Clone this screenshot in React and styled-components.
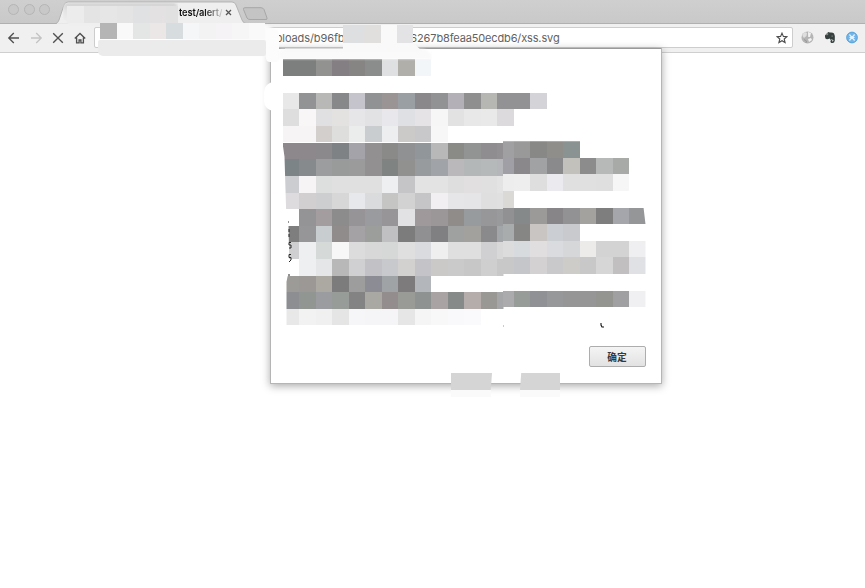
import React from 'react';
import styled, { createGlobalStyle } from 'styled-components';

const GlobalStyle = createGlobalStyle`
  * { box-sizing: border-box; }
  html, body, #root { margin: 0; height: 100%; }
  body { background: #fff; overflow: hidden; font-family: "Inter", "Liberation Sans", sans-serif; }
`;

const Browser = styled.div`
  position: relative;
  display: flex;
  flex-direction: column;
  width: 865px;
  height: 588px;
  overflow: hidden;
  background: #fff;
`;

const TabStrip = styled.header`
  display: flex;
  height: 24px;
  background: linear-gradient(#cfcfcf, #c9c9c9);
  border-bottom: 1px solid #b0b0b0;
`;

const WindowButtons = styled.div`
  display: flex;
  gap: 4.5px;
  padding: 4px 0 0 8px;
  width: 56px;
  flex: none;
`;

const WindowButton = styled.span`
  width: 11px;
  height: 11px;
  flex: none;
  border: 1px solid #b5b5b5;
  border-radius: 50%;
  background: #c8c8c8;
`;

const Tab = styled.div`
  position: relative;
  display: flex;
  align-items: center;
  width: 190px;
  height: 24px;
  padding: 1px 0 0 123px;
`;

const TabShape = styled.svg`
  position: absolute;
  inset: 0;
`;

const TabTitle = styled.span`
  position: relative;
  width: 43px;
  overflow: hidden;
  white-space: nowrap;
  font: 600 9.3px/14px "Inter", sans-serif;
  letter-spacing: -0.1px;
  color: transparent;
  background: linear-gradient(90deg, #111 60%, rgba(30, 30, 30, 0.15) 100%);
  background-clip: text;
`;

const TabClose = styled.svg`
  position: relative;
  margin-left: 3px;
`;

const NewTab = styled.svg`
  margin: 7px 0 0 -4px;
`;

const Toolbar = styled.nav`
  display: flex;
  align-items: center;
  height: 29px;
  padding: 0 7px 1px 6.5px;
  background: #f0f0f0;
  border-bottom: 1px solid #cfcfcf;
`;

const NavIcon = styled.svg`
  flex: none;
  width: 14px;
  height: 14px;
  margin-right: 8px;
  fill: none;
  stroke: ${({ $dim }) => ($dim ? '#c3c3c3' : '#505050')};
  stroke-width: 1.35;
`;

const AddressBar = styled.div`
  display: flex;
  align-items: center;
  width: 699.5px;
  height: 21px;
  margin-left: -1px;
  padding: 0 4.5px 0 177px;
  background: #fff;
  border: 1px solid #cdcdcd;
  border-radius: 2px;
`;

const Address = styled.div`
  display: flex;
  flex: 1;
  color: #626262;
  font: 400 11px/16px "Inter", sans-serif;
  white-space: nowrap;
`;

const UploadPath = styled.span`
  display: flex;
  justify-content: flex-end;
  width: 73px;
  letter-spacing: -0.1px;
`;

const FileName = styled.span`
  margin-left: auto;
  margin-right: 216px;
  letter-spacing: -0.14px;
`;

const Star = styled.svg`
  flex: none;
`;

const Extensions = styled.div`
  display: flex;
  gap: 10px;
  margin-left: 7.5px;
`;

const Dialog = styled.section`
  position: absolute;
  left: 269.5px;
  top: 48px;
  display: flex;
  flex-direction: column;
  width: 392px;
  height: 336px;
  padding: 10px 15px 16px 12px;
  background: #fff;
  border: 1px solid #b5b5b5;
  border-top-color: #999;
  border-radius: 1px;
  box-shadow: 0 2px 9px rgba(0, 0, 0, 0.34);
`;

const Message = styled.div`
  position: relative;
  height: 287px;
  flex: none;
`;

const Heading = styled.div`
  display: flex;
  flex-direction: column;
  gap: 17px;
`;

const LowerArea = styled.div`
  display: flex;
  padding-top: 0.5px;
`;

const LeftMosaic = styled.div`
  display: flex;
  flex-direction: column;
  width: 221px;
  clip-path: polygon(0 0, 100% 0, 100% 100%, 4px 100%, 4px 139px, 5px 134px, 7px 130px, 6px 83px, 4px 80px, 2px 14px);
`;

const RightMosaic = styled.div`
  display: flex;
  flex-direction: column;
  margin-top: -1.5px;
  margin-left: -1px;
  width: 143px;
  clip-path: polygon(0 0, 141px 0, 141px 66px, 143px 83px, 143px 100%, 0 100%);
`;

const PixelRow = styled.div`
  display: flex;
  height: ${({ $height }) => $height || 16.6}px;
`;

const Pixel = styled.span`
  flex: none;
  width: ${({ $width }) => $width || 16.5}px;
  background: ${({ $color }) => $color};
`;

const Confirm = styled.button`
  align-self: flex-end;
  width: 57px;
  height: 21px;
  flex: none;
  padding: 0;
  color: #383838;
  background: linear-gradient(#f4f4f4, #e2e2e2);
  border: 1px solid #adadad;
  border-radius: 2px;
  font: bold 9.7px/18px "Noto Sans CJK SC", sans-serif;
`;

const Patch = styled.div`
  position: absolute;
  left: ${({ $x }) => $x}px;
  top: ${({ $y }) => $y}px;
  width: ${({ $w }) => $w}px;
  height: ${({ $h }) => $h}px;
  display: flex;
  flex-direction: column;
  overflow: hidden;
  background: ${({ $bg }) => $bg || 'transparent'};
  border-radius: ${({ $radius }) => $radius || 0};
  clip-path: ${({ $clip }) => $clip || 'none'};
  filter: ${({ $soft }) => ($soft ? `blur(${$soft}px)` : 'none')};
`;

const Specks = styled.svg`
  position: absolute;
  left: -1px;
  top: 158px;
`;

const split = (s) => s.split(' ').filter(Boolean).map((c) => (c === '-' ? 'transparent' : `#${c}`));

const headingRow = '7d7e7e 7d7e7e 929290 847f82 868584 8b8d8d dfe0e2 b0afaa f2f6f8';

const introRows = [
  'e8e8e8 929394 b8b8b6 86888a c5c3cb 909294 9a9594 9a9fa4 8a888a 919294 b3b0b8 8f8f90 b6b7b2 929294 929294 d4d3d8',
  'dedede f8f6f7 e0e0e2 e3e2e0 e6e6e9 e2e2e4 e8e8ec dfe0e4 e5e3e5 f6f6f6 e2e2e2 e8e8e8 e9e9e9 dcdadc',
  'f6f4f5 f6f4f5 d2cfcd dededc ebeded cacdd0 eceeef cccac9 c8c8ca f7f7f7',
];

const leftRows = [
  '8d888c 8d888c 8b898c 7e8284 a4a3aa 929090 8a8a89 909193 91969a b8b8b9 8a8a86 929393 908d90 929092',
  '7d8488 868a8d 9c9d9f 999b9a 9b9b9c 929090 7f8381 919190 989b9d a0a4a8 bbb8bc b4b7b8 b5b9ba b5b6ba',
  'cccdd0 f6f4f4 dddfdf e0e0e1 e0e0e1 e0e0e1 eeeff1 c5c5c8 e3e3e3 e3e3e3 dedede e1dfdf e0e0e1 e3e3e3',
  'dddbdd d1cfd0 cdcecf d8d7d8 e7e8eb dadbdd c5c5c4 d2d2d2 c5c5c8 f1eff1 e6e6e8 e5e5e7 e0dfdf e0e0e0',
  '- 949395 a39d9f 8d8c8d 969496 9a9b9f 979598 e2e2e4 9f999b 9b9799 8f8c89 979b9d 979799 999a9c',
  '7e7e7e 969698 c8cdd0 918c8c a5a2a5 9b9e9b c0bfc2 7c7c7c 908f91 808083 9ea19f a2a19d 8a8a8c a2a6a8',
  'cfcfd2 eeeff0 d5dad9 f7f7f8 dcdcdd d8d8d8 d5d8d7 dfdfe0 dadbde efeff0 dfdfdf e0dfdf d0d0d2 d8d8d8',
  '- eeeff0 e5e6e8 b8b8b8 d0d0d3 c1c1c6 c8c9cd d3d0d0 c4c4c8 cac9c8 cbcaca c7c7c8 cfcfd0 c8c8c8',
  '9c9b98 9c9896 aca9a3 7d7c7c 9c9d9c 8c8c94 9fa3a6 7e7b7d b3b7bb',
  '8c8e91 919693 9b9c9f 989c99 828382 a9a8a3 938d8d 999b97 8e9290 a9a3a4 868b89 b4adac 9a9895 a5a6a8',
  'e8e8e8 f2f2f3 f0f0f0 e5e5e5 f6f6f8 f5f5f7 f5f5f7 e6e6e6 f5f5f5 f8f8f9 f9f9fb fafafc',
];

const rightRows = [
  'a0a0a2 9a9999 888887 908e8b 8b9292',
  'a09fa6 8b888b a0a2a4 8a898b c2c1bb 8c8c8c b7b8b8 a8aaa7',
  'ededed eeeeef dedede ebebef e0e0e0 e0e0e1 dfdfe0 f6f6f6',
  'dad9d5',
  '919193 86898a 9c9a98 878587 929294 a3a29f 7e7e7e a5a6ab 949698',
  'a8acad 868684 c8c5c2 cbced2 c8cacd',
  'dddcdc d7dbde e0dedf dadbdf d5d7d8 ecebe9 d3d3d3 d3d3d3 efeef0',
  'c8c8c8 c5c6ca d4d1d2 c9c9cb cdccc9 c8c8c8 d6d6d6 c2bfc0 dfe1e4',
  '',
  'ababad 989c99 909194 979899 969696 969696 949591 a0a0a3 f0f0f2',
];

function Pixels({ colors, firstWidth, height }) {
  return (
    <PixelRow $height={height}>
      {split(colors).map((color, i) => (
        <Pixel key={i} $color={color} $width={i === 0 ? firstWidth : undefined} />
      ))}
    </PixelRow>
  );
}

export default function App() {
  return (
    <>
      <GlobalStyle />
      <Browser>
        <TabStrip>
          <WindowButtons><WindowButton /><WindowButton /><WindowButton /></WindowButtons>
          <Tab>
            <TabShape width="190" height="24" viewBox="0 0 190 24">
              <path d="M0 23.5Q2 23 3 20L8 5Q9 2 12 2H176Q179 2 180 5L186 20Q187 23 190 23.5V24H0Z" fill="#efefef" stroke="#aaa" strokeWidth=".8" />
              <path d="M1 24H189" stroke="#efefef" strokeWidth="1.4" />
            </TabShape>
            <TabTitle>test/alert/</TabTitle>
            <TabClose width="7" height="7" viewBox="0 0 7 7"><path d="M1 1 6 6M6 1 1 6" stroke="#555" strokeWidth="1.25" /></TabClose>
          </Tab>
          <NewTab width="28" height="14" viewBox="0 0 28 14">
            <path d="M3 .7H19Q21 .7 22 2.5L25 11Q25.5 12.5 24 12.5H8Q6 12.5 5 11L1.5 2.5Q1 .7 3 .7Z" fill="#c4c4c4" stroke="#a7a7a7" />
          </NewTab>
        </TabStrip>
        <Toolbar>
          <NavIcon viewBox="0 0 14 14"><path d="M12 7H2M6.8 2 1.8 7l5 5" /></NavIcon>
          <NavIcon $dim viewBox="0 0 14 14"><path d="M2 7h10M7.2 2l5 5-5 5" /></NavIcon>
          <NavIcon viewBox="0 0 14 14"><path d="m2.2 2.2 9.6 9.6m0-9.6-9.6 9.6" /></NavIcon>
          <NavIcon viewBox="0 0 14 14"><path d="M1.8 7.5 7 2.4l5.2 5.1M3.6 6.5v5.3h2.5V9h1.8v2.8h2.5V6.5" /></NavIcon>
          <AddressBar>
            <Address>
              <UploadPath>uploads/b96fb</UploadPath>
              <FileName>6267b8feaa50ecdb6/xss.svg</FileName>
            </Address>
            <Star width="12" height="12" viewBox="0 0 12 12"><path d="m6 1.1 1.4 3.3 3.5.3-2.7 2.3.9 3.5L6 8.7l-3.1 1.8.9-3.5L1.1 4.7l3.5-.3Z" fill="none" stroke="#4c4c4c" strokeWidth="1.1" /></Star>
          </AddressBar>
          <Extensions>
            <svg width="13" height="13" viewBox="0 0 13 13">
              <circle cx="6.5" cy="6.5" r="6" fill="#b5b5b5" />
              <path d="M1.5 3 4 1l2 1-.5 3L3 7 1.5 5Z" fill="#dedede" />
              <path d="M7 1l3 1-1 4H7.2ZM7 8l3-1 1 2-3 2Z" fill="#f2f2f2" />
              <path d="M3 8.5 5.5 10 5 12" stroke="#999" fill="none" />
            </svg>
            <svg width="12" height="13" viewBox="0 0 12 13">
              <path d="M1 4.2 4 1.2Q5 .8 5.7 1.6Q9 1.2 10 2.6Q11.6 5 10.8 9.5Q10.5 12 8.5 12Q6 12 6.5 9.7Q7 8.5 8.5 9.2L8 10.3Q9.3 10.8 9.5 9.1Q8 8.2 6.2 8.8L5.8 7.6Q2.5 9.1 1.5 7.5Q.8 6 1 4.2Z" fill="#36413f" />
              <path d="M1.3 3.7H3.7V1.5M7.5 5.1h1.4" stroke="#d7d7d7" strokeWidth=".5" fill="none" />
            </svg>
            <svg width="12" height="13" viewBox="0 0 12 13">
              <circle cx="6" cy="6.5" r="5.4" fill="#73b4e8" stroke="#459bd8" strokeWidth=".8" />
              <path d="M3.4 3.5 8.6 9.5M8.600 3.5 3.4 9.5M3.5 6.5h5" stroke="#e5f3ff" strokeWidth="1.2" />
            </svg>
          </Extensions>
        </Toolbar>

        <Dialog>
          <Message>
            <Heading>
              <Pixels colors={headingRow} height={16.5} />
              <div>{introRows.map((colors, i) => <Pixels key={i} colors={colors} />)}</div>
            </Heading>
            <LowerArea>
              <LeftMosaic>{leftRows.map((colors, i) => <Pixels key={i} colors={colors} />)}</LeftMosaic>
              <RightMosaic>{rightRows.map((colors, i) => <Pixels key={i} colors={colors} firstWidth={11} />)}</RightMosaic>
            </LowerArea>
            <Specks width="325" height="115" viewBox="0 0 325 115">
              <path d="M6 5h1M7 12v3M7 17v3M9 25.500H7V28H9V31H7M9 37.500H7V40.500H9V43L7 45M6 58h2" fill="none" stroke="#292929" />
              <path d="M221 109h1" stroke="#999" />
              <path d="M319 106v2l1 2h2" fill="none" stroke="#111" strokeWidth="1.1" />
            </Specks>
          </Message>
          <Confirm>确定</Confirm>
        </Dialog>

        <Patch $x={63} $y={2.5} $w={115} $h={23} $bg="linear-gradient(#cfcfcf, #e3e3e3 7px, #efefef 20px)" $radius="5px" $soft={0.9} $clip="polygon(0 0, 100% 0, 100% 100%, 7px 100%, 0 70%)" />
        <Patch $x={67} $y={6} $w={111} $h={17} $soft={0.6}>
          <Pixels colors="ececec e4e4e4 e6e6e6 e4e4e4 e0e1e2 e3e1e1 e1e1e1" />
        </Patch>
        <Patch $x={182} $y={25} $w={94} $h={31} $bg="#fbfbfb" $radius="0 12px 8px 0" $soft={1} />
        <Patch $x={98} $y={40} $w={168} $h={16} $bg="#ebebeb" $radius="2px 2px 2px 5px" $soft={0.7} />
        <Patch $x={100} $y={22.5} $w={166} $h={17} $soft={0.5}>
          <Pixels colors="b5b5b5 f9f9f9 e4e6e6 ebe7e6 d7dcde f4f6f7 f3f3f3 f5f3f5 f6f6f6 f9f9f9" />
        </Patch>
        <Patch $x={266} $y={29} $w={13} $h={33} $bg="#fcfcfc" $radius="0 5px 4px 4px" $soft={0.7} />
        <Patch $x={279} $y={49} $w={153} $h={10} $bg="#fafafa" $radius="8px 30px 0 0" $soft={1} />
        <Patch $x={264} $y={82} $w={12} $h={29} $bg="#fff" $radius="10px 0 0 10px" />
        <Patch $x={343} $y={25} $w={70} $h={18} $bg="#e3e3e5">
          <Pixels colors="dddfe1 e0dfdd f9f9f9 e3e3e5" firstWidth={21} height={18} />
        </Patch>
        <Patch $x={285} $y={43} $w={138} $h={9} $bg="#f9f9f9" $radius="8px 18px 0 0" $clip="polygon(0 60%, 42% 60%, 42% 0, 93% 0, 100% 100%, 0 100%)" />
        <Patch $x={451} $y={373} $w={41} $h={17} $bg="#d5d5d5" $clip="polygon(0 0, 100% 0, 97% 100%, 0 100%)" />
        <Patch $x={520} $y={373} $w={40} $h={17} $bg="#d5d5d5" $clip="polygon(3% 0, 100% 0, 100% 100%, 0 100%)" />
        <Patch $x={451} $y={390} $w={40} $h={7} $bg="#fafafa" />
        <Patch $x={520} $y={390} $w={40} $h={7} $bg="#fafafa" />
      </Browser>
    </>
  );
}
